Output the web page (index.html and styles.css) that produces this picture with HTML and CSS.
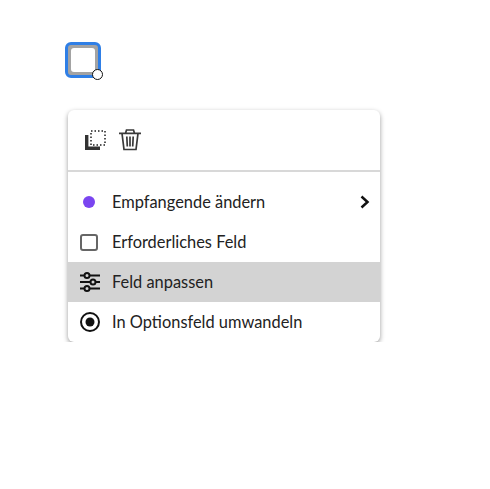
FILE: index.html
```html
<!DOCTYPE html>
<html lang="de">
<head>
  <meta charset="UTF-8">
  <title>Feld anpassen</title>
  <link rel="stylesheet" href="styles.css">
</head>
<body>
  <div class="field">
    <div class="field-box"></div>
    <span class="field-handle"></span>
  </div>

  <div class="menu">
    <div class="toolbar">
      <svg class="tool" width="24" height="24" viewBox="0 0 24 24">
        <path d="M2 7h3.400v11.600H17V22H2z" fill="#333"/>
        <path d="M8 3h14v14H8z" fill="none" stroke="#555" stroke-width="2" stroke-dasharray="1.500 2"/>
      </svg>
      <svg class="tool" width="24" height="24" viewBox="0 0 24 24" fill="none" stroke="#3a3a3a" stroke-width="1.700">
        <path d="M1 5.300h22M7.500 5.300l1-3.300h7l1 3.300M4 5.300l2 16.200h12l2-16.200M8.800 8.500l.5 10M12 8.500v10M15.200 8.500l-.5 10"/>
      </svg>
    </div>

    <ul class="menu-list">
      <li class="menu-item">
        <span class="item-icon"><span class="dot"></span></span>
        <span class="item-label">Empfangende ändern</span>
        <svg class="chevron" width="10" height="14" viewBox="0 0 10 14" fill="none" stroke="#111" stroke-width="2.500">
          <path d="M1.500 1.500L7.500 7l-6 5.500"/>
        </svg>
      </li>
      <li class="menu-item">
        <span class="item-icon"><span class="checkbox"></span></span>
        <span class="item-label">Erforderliches Feld</span>
      </li>
      <li class="menu-item is-active">
        <span class="item-icon">
          <svg width="22" height="22" viewBox="0 0 22 22" fill="none" stroke="#111" stroke-width="2">
            <path d="M1 4.500h4.500M10.500 4.500H21M1 11h10.500M16.500 11H21M1 17.500h4.500M10.500 17.500H21"/>
            <circle cx="8" cy="4.500" r="2.500"/>
            <circle cx="14" cy="11" r="2.500"/>
            <circle cx="8" cy="17.500" r="2.500"/>
          </svg>
        </span>
        <span class="item-label">Feld anpassen</span>
      </li>
      <li class="menu-item">
        <span class="item-icon">
          <svg width="20" height="20" viewBox="0 0 20 20">
            <circle cx="10" cy="10" r="9" fill="none" stroke="#111" stroke-width="2"/>
            <circle cx="10" cy="10" r="4.500" fill="#111"/>
          </svg>
        </span>
        <span class="item-label">In Optionsfeld umwandeln</span>
      </li>
    </ul>
  </div>
</body>
</html>
```

FILE: styles.css
```css
body {
  margin: 0;
  background-color: #fff;
  font-family: Lato, "Open Sans", sans-serif;
  color: #222;
}

.field {
  position: relative;
  width: 36px;
  height: 36px;
  margin: 42px 0 0 65px;
}

.field-box {
  box-sizing: border-box;
  width: 36px;
  height: 36px;
  border: 3px solid #2f7fe6;
  border-radius: 6px;
  background: #a3a3a3;
  padding: 3px;
}

.field-box::after {
  content: "";
  display: block;
  width: 100%;
  height: 100%;
  background: #fff;
  border-radius: 3px;
}

.field-handle {
  position: absolute;
  right: -2px;
  bottom: -2px;
  box-sizing: border-box;
  width: 11px;
  height: 11px;
  background: #fff;
  border: 1.5px solid #111;
  border-radius: 50%;
}

.menu {
  width: 312px;
  margin: 32px 0 0 68px;
  background: #fff;
  border-radius: 6px;
  box-shadow: 0 2px 5px rgba(0, 0, 0, 0.4);
}

.toolbar {
  display: flex;
  align-items: center;
  gap: 11px;
  height: 60px;
  padding-left: 15px;
  border-bottom: 2px solid #d8d8d8;
}

.menu-list {
  list-style: none;
  margin: 0;
  padding: 10px 0 0;
}

.menu-item {
  display: flex;
  align-items: center;
  height: 40px;
  font-size: 16.4px;
}

.menu-item.is-active {
  background: #d3d3d3;
}

.item-icon {
  display: flex;
  align-items: center;
  justify-content: center;
  width: 44px;
  flex-shrink: 0;
}

.item-label {
  flex: 1;
  padding-bottom: 2px;
}

.dot {
  width: 12px;
  height: 12px;
  margin-right: 2px;
  background: #7a45f0;
  border-radius: 50%;
}

.checkbox {
  box-sizing: border-box;
  width: 18px;
  height: 17px;
  margin-right: 2px;
  border: 2px solid #666;
  border-radius: 3px;
}

.chevron {
  margin-right: 10px;
}
```
